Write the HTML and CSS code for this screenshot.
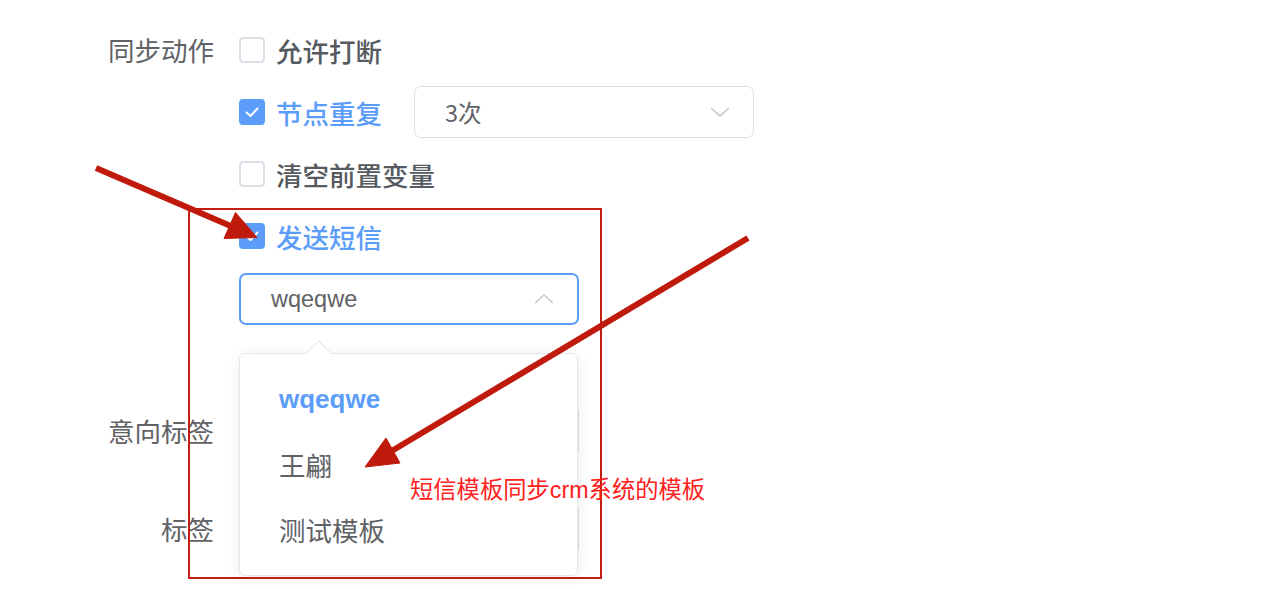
FILE: index.html
```html
<!DOCTYPE html>
<html lang="zh-CN">
<head>
<meta charset="utf-8">
<title>同步动作</title>
<link rel="stylesheet" href="styles.css">
</head>
<body>
<div class="page">
  <div class="form">
    <div class="form-row">
      <div class="label">同步动作</div>
      <div class="content">
        <div class="opt">
          <span class="checkbox"></span><span class="opt-text">允许打断</span>
        </div>
        <div class="opt">
          <span class="checkbox checked"><svg viewBox="0 0 26 26" width="26" height="26"><path d="M7.5 13.5 L11.5 17 L18.5 9.5" fill="none" stroke="#fff" stroke-width="2" stroke-linecap="round" stroke-linejoin="round"/></svg></span><span class="opt-text blue">节点重复</span>
          <div class="select select-times">
            <span class="select-value">3次</span>
            <svg class="chev" viewBox="0 0 20 10" width="20" height="10"><path d="M1 1 L10 9 L19 1" fill="none" stroke="#c0c4cc" stroke-width="1.4"/></svg>
          </div>
        </div>
        <div class="opt">
          <span class="checkbox"></span><span class="opt-text">清空前置变量</span>
        </div>
        <div class="opt">
          <span class="checkbox checked"><svg viewBox="0 0 26 26" width="26" height="26"><path d="M7.5 13.5 L11.5 17 L18.5 9.5" fill="none" stroke="#fff" stroke-width="2" stroke-linecap="round" stroke-linejoin="round"/></svg></span><span class="opt-text blue">发送短信</span>
        </div>
        <div class="select-wrap">
          <div class="select select-sms">
            <span class="select-value">wqeqwe</span>
            <svg class="chev" viewBox="0 0 20 10" width="20" height="10"><path d="M1 9 L10 1 L19 9" fill="none" stroke="#c0c4cc" stroke-width="1.4"/></svg>
          </div>
          <div class="dropdown">
            <div class="caret"></div>
            <ul class="menu">
              <li class="item active">wqeqwe</li>
              <li class="item">王翩</li>
              <li class="item">测试模板</li>
            </ul>
          </div>
        </div>
      </div>
    </div>
    <div class="form-row row-intent">
      <div class="label">意向标签</div>
      <div class="content"><div class="input"></div></div>
    </div>
    <div class="form-row row-tag">
      <div class="label">标签</div>
      <div class="content"><div class="input"></div></div>
    </div>
  </div>

  <div class="note-box"></div>
  <div class="note-text">短信模板同步crm系统的模板</div>
  <svg class="arrows" width="1280" height="589" viewBox="0 0 1280 589">
    <g fill="#bf1a0b" stroke="#bf1a0b">
      <line x1="96" y1="168" x2="233" y2="227" stroke-width="6"/>
      <polygon points="257,237.5 224,238.5 235.5,212.5" stroke-width="1"/>
      <line x1="748" y1="238" x2="390" y2="452" stroke-width="6"/>
      <polygon points="365,467 400,463 386,438" stroke-width="1"/>
    </g>
  </svg>
</div>
</body>
</html>
```

FILE: styles.css
```css
* { box-sizing: border-box; }
html, body {
  margin: 0;
  padding: 0;
  background: #fff;
}
body {
  font-family: "Noto Sans CJK SC", "Liberation Sans", sans-serif;
  color: #606266;
}
.page {
  position: relative;
  width: 1280px;
  height: 589px;
  overflow: hidden;
}
.form {
  padding-top: 24px;
}
.form-row {
  display: flex;
  gap: 25px;
}
.label {
  width: 214px;
  flex: none;
  text-align: right;
  font-size: 26.5px;
  line-height: 52px;
  height: 52px;
  color: #606266;
}
.content {
  display: flex;
  flex-direction: column;
  gap: 10px;
}
.opt {
  display: flex;
  align-items: center;
  height: 52px;
}
.checkbox {
  width: 26px;
  height: 26px;
  border: 2px solid #dcdfe6;
  border-radius: 4px;
  background: #fff;
  flex: none;
  display: flex;
}
.checkbox.checked {
  background: #5b9df8;
  border-color: #5b9df8;
}
.checkbox.checked svg {
  margin: -2px;
}
.opt-text {
  margin-left: 11px;
  font-size: 26.5px;
  font-weight: 500;
  color: #555a60;
}
.opt-text.blue {
  color: #5b9df8;
}
.select {
  height: 52px;
  border: 1.5px solid #dcdfe6;
  border-radius: 7px;
  display: flex;
  align-items: center;
  justify-content: space-between;
  padding: 0 23px 0 30px;
  background: #fff;
}
.select-times {
  width: 340px;
  margin-left: 32px;
}
.select-value {
  font-family: "Liberation Sans", "Noto Sans CJK SC", sans-serif;
  font-size: 23.5px;
  color: #606266;
}
.select-times .select-value {
  font-family: "Noto Sans CJK SC", sans-serif;
}
.select-wrap {
  position: relative;
  margin-top: 1px;
}
.select-sms {
  width: 340px;
  border-color: #5b9df8;
  border-width: 2px;
}
.dropdown {
  position: absolute;
  left: 0;
  top: 80px;
  width: 339px;
  height: 223px;
  background: #fff;
  border: 1.5px solid #e4e7ed;
  border-radius: 6px;
  box-shadow: 0 2px 14px rgba(0, 0, 0, 0.08);
  z-index: 5;
}
.caret {
  position: absolute;
  left: 70px;
  top: -10px;
  width: 18px;
  height: 18px;
  background: #fff;
  border-left: 1.5px solid #e4e7ed;
  border-top: 1.5px solid #e4e7ed;
  transform: rotate(45deg);
}
.menu {
  list-style: none;
  margin: 0;
  padding: 13px 0;
}
.item {
  height: 65px;
  line-height: 65px;
  padding-left: 39px;
  font-size: 26.5px;
  color: #606266;
}
.item.active {
  font-family: "Liberation Sans", sans-serif;
  font-size: 26px;
  font-weight: 700;
  color: #5b9df8;
}
.row-intent {
  margin-top: 80px;
}
.row-tag {
  margin-top: 46px;
}
.input {
  width: 340px;
  height: 52px;
  border: 1.5px solid #dcdfe6;
  border-radius: 7px;
}
.note-box {
  position: absolute;
  left: 188px;
  top: 208px;
  width: 414px;
  height: 371px;
  border: 2.5px solid #c21d10;
  z-index: 10;
}
.note-text {
  position: absolute;
  left: 410px;
  top: 475px;
  font-family: "Liberation Sans", "Noto Sans CJK SC", sans-serif;
  font-size: 23.3px;
  line-height: 30px;
  color: #ff2020;
  z-index: 10;
}
.arrows {
  position: absolute;
  left: 0;
  top: 0;
  z-index: 11;
}
```
